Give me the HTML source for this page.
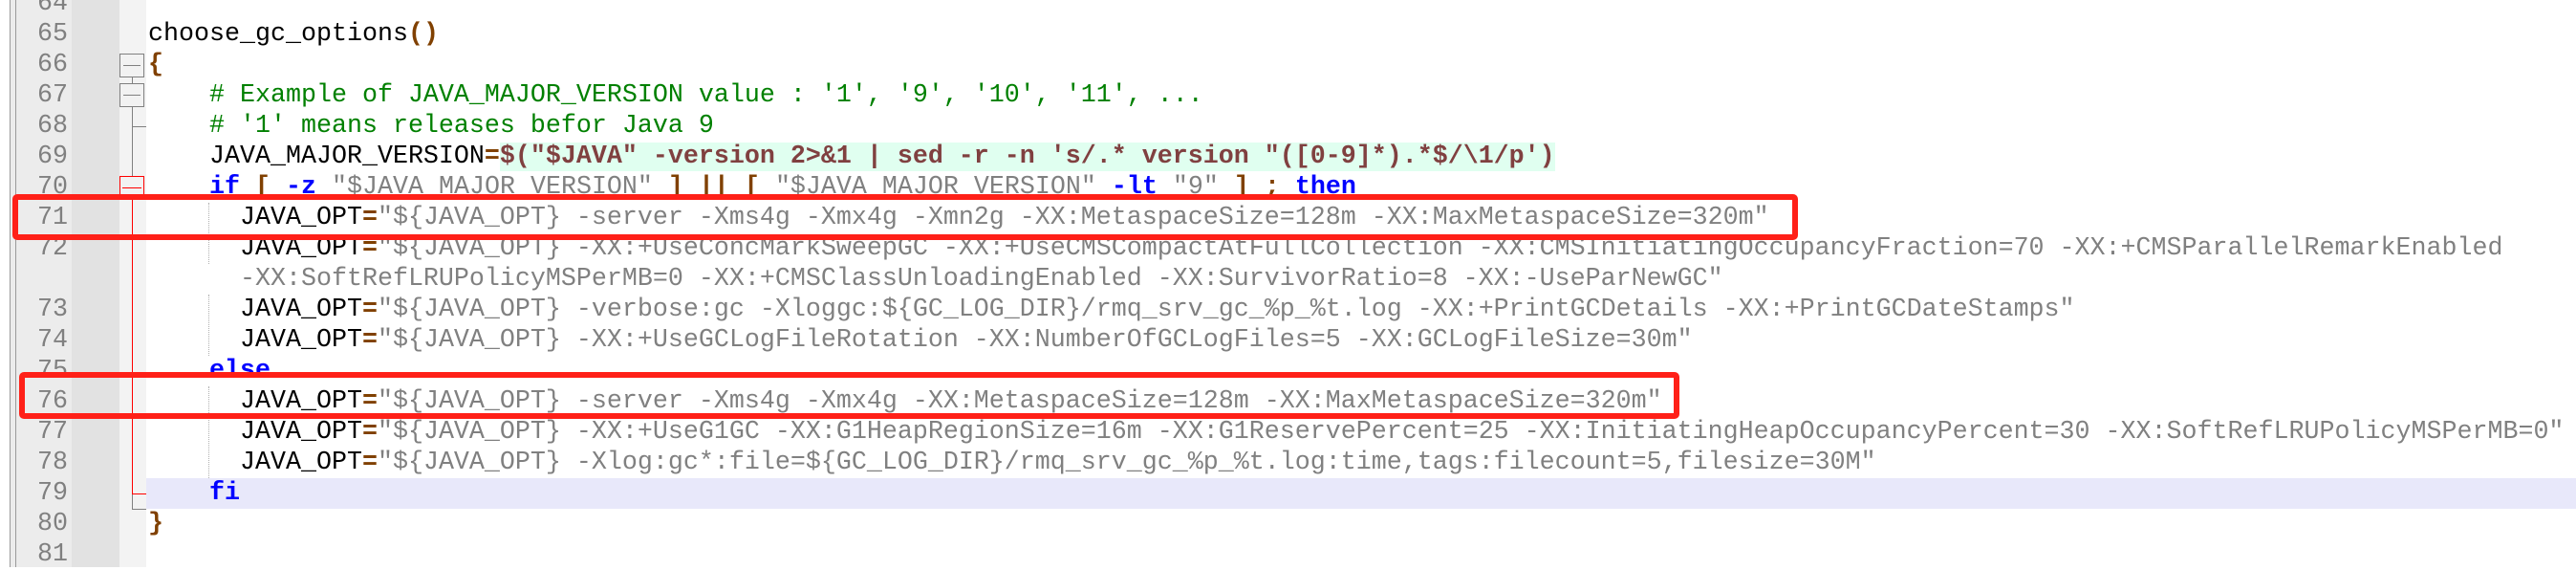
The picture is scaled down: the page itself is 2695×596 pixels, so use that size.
<!DOCTYPE html>
<html><head><meta charset="utf-8"><style>
*{margin:0;padding:0}
body{width:2695px;height:593px;background:#fff;position:relative;overflow:hidden;font-family:"Liberation Mono",monospace;font-size:26.66px}
.a{position:absolute}
.row{position:absolute;left:155px;height:32px;line-height:32px;white-space:pre;color:#000}
.num{position:absolute;left:20px;width:51px;text-align:right;height:32px;line-height:32px;color:#808080;white-space:pre}
.s{color:#808080}
.o{color:#804000;font-weight:bold}
.k{color:#0000ff;font-weight:bold}
.c{color:#008000}
.x{color:#804040;font-weight:bold;background:#e0fff0}
.g{position:absolute;left:218px;width:0;border-left:1px dotted #b0b0b0}
.box{position:absolute;left:125px;width:26px;height:25px;border:1px solid #808080;background:#f2f2f2;box-sizing:border-box}
.box:after{content:"";position:absolute;left:3px;right:3px;top:11px;height:1px;background:#808080}
.rb{position:absolute;border:6px solid #ff2018;border-radius:5px;box-sizing:border-box}
</style></head><body>
<div class="a" style="left:10px;top:0;width:65px;height:593px;background:#ececec"></div>
<div class="a" style="left:75px;top:0;width:50px;height:593px;background:#e2e2e2"></div>
<div class="a" style="left:125px;top:0;width:28px;height:593px;background:#f3f3f3"></div>
<div class="a" style="left:10px;top:0;width:1px;height:593px;background:#9a9a9a"></div>
<div class="a" style="left:16px;top:0;width:1px;height:593px;background:#9a9a9a"></div>
<div class="a" style="left:153px;top:500px;width:2542px;height:32px;background:#e8e8fa"></div>

<!-- fold lines -->
<div class="a" style="left:138px;top:81px;width:1px;height:103px;background:#808080"></div>
<div class="a" style="left:138px;top:132px;width:15px;height:1px;background:#808080"></div>
<div class="a" style="left:138px;top:209px;width:1px;height:307px;background:#ff0000"></div>
<div class="a" style="left:138px;top:516px;width:15px;height:1px;background:#ff0000"></div>
<div class="a" style="left:138px;top:517px;width:1px;height:16px;background:#808080"></div>
<div class="a" style="left:138px;top:532px;width:15px;height:1px;background:#808080"></div>
<div class="box" style="top:56px"></div>
<div class="box" style="top:87px"></div>
<div class="box" style="top:184px;border-color:#ff0000"></div>
<style>.box:nth-of-type(0){}</style>
<div class="a" style="left:128px;top:196px;width:20px;height:1px;background:#ff0000"></div>

<!-- indent guides -->
<div class="g" style="top:212px;height:64px"></div>
<div class="g" style="top:308px;height:64px"></div>
<div class="g" style="top:404px;height:96px"></div>

<div class="num" style="top:-12px">64</div>
<div class="num" style="top:20px">65</div>
<div class="num" style="top:52px">66</div>
<div class="num" style="top:84px">67</div>
<div class="num" style="top:116px">68</div>
<div class="num" style="top:148px">69</div>
<div class="num" style="top:180px">70</div>
<div class="num" style="top:212px">71</div>
<div class="num" style="top:244px">72</div>
<div class="num" style="top:308px">73</div>
<div class="num" style="top:340px">74</div>
<div class="num" style="top:372px">75</div>
<div class="num" style="top:404px">76</div>
<div class="num" style="top:436px">77</div>
<div class="num" style="top:468px">78</div>
<div class="num" style="top:500px">79</div>
<div class="num" style="top:532px">80</div>
<div class="num" style="top:564px">81</div>

<div class="row" style="top:20px">choose_gc_options<span class="o">()</span></div>
<div class="row" style="top:52px"><span class="o">{</span></div>
<div class="row" style="top:84px"><span class="c">    # Example of JAVA_MAJOR_VERSION value : '1', '9', '10', '11', ...</span></div>
<div class="row" style="top:116px"><span class="c">    # '1' means releases befor Java 9</span></div>
<div class="row" style="top:148px">    JAVA_MAJOR_VERSION<span class="o">=</span><span class="x">$("$JAVA" -version 2&gt;&amp;1 | sed -r -n 's/.* version "([0-9]*).*$/\1/p')</span></div>
<div class="row" style="top:180px">    <span class="k">if</span> <span class="o">[</span> <span class="k">-z</span> <span class="s">"$JAVA_MAJOR_VERSION"</span> <span class="o">]</span> <span class="o">||</span> <span class="o">[</span> <span class="s">"$JAVA_MAJOR_VERSION"</span> <span class="k">-lt</span> <span class="s">"9"</span> <span class="o">]</span> <span class="o">;</span> <span class="k">then</span></div>
<div class="row" style="top:212px">      JAVA_OPT<span class="o">=</span><span class="s">"${JAVA_OPT} -server -Xms4g -Xmx4g -Xmn2g -XX:MetaspaceSize=128m -XX:MaxMetaspaceSize=320m"</span></div>
<div class="row" style="top:244px">      JAVA_OPT<span class="o">=</span><span class="s">"${JAVA_OPT} -XX:+UseConcMarkSweepGC -XX:+UseCMSCompactAtFullCollection -XX:CMSInitiatingOccupancyFraction=70 -XX:+CMSParallelRemarkEnabled</span></div>
<div class="row" style="top:276px"><span class="s">      -XX:SoftRefLRUPolicyMSPerMB=0 -XX:+CMSClassUnloadingEnabled -XX:SurvivorRatio=8 -XX:-UseParNewGC"</span></div>
<div class="row" style="top:308px">      JAVA_OPT<span class="o">=</span><span class="s">"${JAVA_OPT} -verbose:gc -Xloggc:${GC_LOG_DIR}/rmq_srv_gc_%p_%t.log -XX:+PrintGCDetails -XX:+PrintGCDateStamps"</span></div>
<div class="row" style="top:340px">      JAVA_OPT<span class="o">=</span><span class="s">"${JAVA_OPT} -XX:+UseGCLogFileRotation -XX:NumberOfGCLogFiles=5 -XX:GCLogFileSize=30m"</span></div>
<div class="row" style="top:372px">    <span class="k">else</span></div>
<div class="row" style="top:404px">      JAVA_OPT<span class="o">=</span><span class="s">"${JAVA_OPT} -server -Xms4g -Xmx4g -XX:MetaspaceSize=128m -XX:MaxMetaspaceSize=320m"</span></div>
<div class="row" style="top:436px">      JAVA_OPT<span class="o">=</span><span class="s">"${JAVA_OPT} -XX:+UseG1GC -XX:G1HeapRegionSize=16m -XX:G1ReservePercent=25 -XX:InitiatingHeapOccupancyPercent=30 -XX:SoftRefLRUPolicyMSPerMB=0"</span></div>
<div class="row" style="top:468px">      JAVA_OPT<span class="o">=</span><span class="s">"${JAVA_OPT} -Xlog:gc*:file=${GC_LOG_DIR}/rmq_srv_gc_%p_%t.log:time,tags:filecount=5,filesize=30M"</span></div>
<div class="row" style="top:500px">    <span class="k">fi</span></div>
<div class="row" style="top:532px"><span class="o">}</span></div>

<div class="rb" style="left:13px;top:203px;width:1868px;height:48px"></div>
<div class="rb" style="left:20px;top:389px;width:1737px;height:49px"></div>
</body></html>
